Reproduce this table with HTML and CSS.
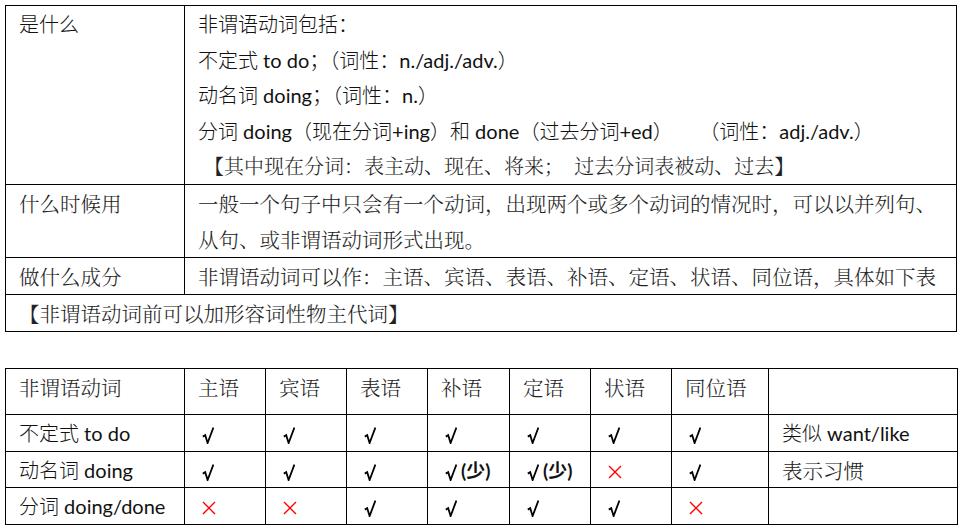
FILE: index.html
```html
<!DOCTYPE html>
<html lang="zh">
<head>
<meta charset="utf-8">
<link rel="stylesheet" href="styles.css">
</head>
<body>
<table class="grid top">
  <colgroup><col class="c-label"><col class="c-body"></colgroup>
  <tr class="r-what">
    <td class="sans">是什么</td>
    <td>
      <div class="sans">非谓语动词包括：</div>
      <div class="sans">不定式<span class="lat"> to do</span>；（词性：<span class="lat">n./adj./adv.</span>）</div>
      <div class="sans">动名词<span class="lat"> doing</span>；（词性：<span class="lat">n.</span>）</div>
      <div class="sans pre">分词<span class="lat"> doing</span>（现在分词<span class="lat">+ing</span>）和<span class="lat"> done</span>（过去分词<span class="lat">+ed</span>）      （词性：<span class="lat">adj./adv.</span>）</div>
      <div class="serif pre note">【其中现在分词：表主动、现在、将来；  过去分词表被动、过去】</div>
    </td>
  </tr>
  <tr class="r-when">
    <td class="serif">什么时候用</td>
    <td class="serif">一般一个句子中只会有一个动词，出现两个或多个动词的情况时，可以以并列句、<br>从句、或非谓语动词形式出现。</td>
  </tr>
  <tr class="r-one">
    <td class="serif">做什么成分</td>
    <td class="serif">非谓语动词可以作：主语、宾语、表语、补语、定语、状语、同位语，具体如下表</td>
  </tr>
  <tr class="r-one">
    <td class="serif" colspan="2">【非谓语动词前可以加形容词性物主代词】</td>
  </tr>
</table>

<table class="grid bottom">
  <colgroup>
    <col class="b1"><col class="b2"><col class="b2"><col class="b2"><col class="b3"><col class="b2"><col class="b2"><col class="b4"><col class="b5">
  </colgroup>
  <tr class="r-head serif">
    <td>非谓语动词</td><td>主语</td><td>宾语</td><td>表语</td><td>补语</td><td>定语</td><td>状语</td><td>同位语</td><td></td>
  </tr>
  <tr class="r-row">
    <td class="sans">不定式<span class="lat"> to do</span></td>
    <td class="mk"><svg class="ck" viewBox="0 0 12 17" width="12" height="17"><path d="M0.8 9.6L3.2 8.2L5.6 16L11.4 0.6"/></svg></td>
    <td class="mk"><svg class="ck" viewBox="0 0 12 17" width="12" height="17"><path d="M0.8 9.6L3.2 8.2L5.6 16L11.4 0.6"/></svg></td>
    <td class="mk"><svg class="ck" viewBox="0 0 12 17" width="12" height="17"><path d="M0.8 9.6L3.2 8.2L5.6 16L11.4 0.6"/></svg></td>
    <td class="mk"><svg class="ck" viewBox="0 0 12 17" width="12" height="17"><path d="M0.8 9.6L3.2 8.2L5.6 16L11.4 0.6"/></svg></td>
    <td class="mk"><svg class="ck" viewBox="0 0 12 17" width="12" height="17"><path d="M0.8 9.6L3.2 8.2L5.6 16L11.4 0.6"/></svg></td>
    <td class="mk"><svg class="ck" viewBox="0 0 12 17" width="12" height="17"><path d="M0.8 9.6L3.2 8.2L5.6 16L11.4 0.6"/></svg></td>
    <td class="mk"><svg class="ck" viewBox="0 0 12 17" width="12" height="17"><path d="M0.8 9.6L3.2 8.2L5.6 16L11.4 0.6"/></svg></td>
    <td class="sans">类似<span class="lat"> want/like</span></td>
  </tr>
  <tr class="r-row">
    <td class="sans">动名词<span class="lat"> doing</span></td>
    <td class="mk"><svg class="ck" viewBox="0 0 12 17" width="12" height="17"><path d="M0.8 9.6L3.2 8.2L5.6 16L11.4 0.6"/></svg></td>
    <td class="mk"><svg class="ck" viewBox="0 0 12 17" width="12" height="17"><path d="M0.8 9.6L3.2 8.2L5.6 16L11.4 0.6"/></svg></td>
    <td class="mk"><svg class="ck" viewBox="0 0 12 17" width="12" height="17"><path d="M0.8 9.6L3.2 8.2L5.6 16L11.4 0.6"/></svg></td>
    <td class="mk"><svg class="ck" viewBox="0 0 12 17" width="12" height="17"><path d="M0.8 9.6L3.2 8.2L5.6 16L11.4 0.6"/></svg><span class="few"><span class="par">(</span>少<span class="par">)</span></span></td>
    <td class="mk"><svg class="ck" viewBox="0 0 12 17" width="12" height="17"><path d="M0.8 9.6L3.2 8.2L5.6 16L11.4 0.6"/></svg><span class="few"><span class="par">(</span>少<span class="par">)</span></span></td>
    <td class="mk"><svg class="no" viewBox="0 0 14 14" width="14" height="14"><path d="M1 1L13 13M13 1L1 13"/></svg></td>
    <td class="mk"><svg class="ck" viewBox="0 0 12 17" width="12" height="17"><path d="M0.8 9.6L3.2 8.2L5.6 16L11.4 0.6"/></svg></td>
    <td class="serif">表示习惯</td>
  </tr>
  <tr class="r-row">
    <td class="sans">分词<span class="lat"> doing/done</span></td>
    <td class="mk"><svg class="no" viewBox="0 0 14 14" width="14" height="14"><path d="M1 1L13 13M13 1L1 13"/></svg></td>
    <td class="mk"><svg class="no" viewBox="0 0 14 14" width="14" height="14"><path d="M1 1L13 13M13 1L1 13"/></svg></td>
    <td class="mk"><svg class="ck" viewBox="0 0 12 17" width="12" height="17"><path d="M0.8 9.6L3.2 8.2L5.6 16L11.4 0.6"/></svg></td>
    <td class="mk"><svg class="ck" viewBox="0 0 12 17" width="12" height="17"><path d="M0.8 9.6L3.2 8.2L5.6 16L11.4 0.6"/></svg></td>
    <td class="mk"><svg class="ck" viewBox="0 0 12 17" width="12" height="17"><path d="M0.8 9.6L3.2 8.2L5.6 16L11.4 0.6"/></svg></td>
    <td class="mk"><svg class="ck" viewBox="0 0 12 17" width="12" height="17"><path d="M0.8 9.6L3.2 8.2L5.6 16L11.4 0.6"/></svg></td>
    <td class="mk"><svg class="no" viewBox="0 0 14 14" width="14" height="14"><path d="M1 1L13 13M13 1L1 13"/></svg></td>
    <td></td>
  </tr>
</table>
</body>
</html>
```
FILE: styles.css
```css
html, body {
  margin: 0;
  padding: 0;
  background: #fff;
}
body {
  padding: 5px 0 0 5px;
  color: #111;
  font-family: "Noto Sans CJK SC", sans-serif;
}
.grid {
  border-collapse: collapse;
  table-layout: fixed;
}
.grid td {
  border: 1.5px solid #000;
  padding: 0 13px;
  vertical-align: top;
  line-height: 35px;
  font-size: 20px;
  white-space: nowrap;
  overflow: hidden;
}
.top { width: 951px; }
.c-label { width: 179px; }
.c-body { width: 772px; }
.r-what { height: 179px; }
.r-what td { line-height: 35.5px; }
.r-when { height: 73px; }
.r-when td { line-height: 36px; }
.r-one { height: 37px; }
.r-one td { padding-top: 1px; }
.r-row { height: 36.5px; }
.r-row td { line-height: 34px; padding-top: 1px; }
.r-head { height: 46.5px; }
.r-head td { padding-top: 1px; }
.sans {
  font-family: "Noto Sans CJK SC", sans-serif;
  font-weight: 300;
  color: #111;
}
.lat {
  font-family: Lato, "Noto Sans CJK SC", sans-serif;
  font-weight: 400;
  line-height: 20px;
}
.serif {
  font-family: "Noto Serif CJK SC", "Noto Sans CJK SC", serif;
  font-weight: 300;
  color: #222;
}
.grid td.serif, .grid tr.serif td { font-size: 20.5px; }
.pre { white-space: pre; }
.note { padding-left: 6px; }
.bottom {
  margin-top: 35.5px;
  width: 952px;
}
.b1 { width: 179px; }
.b2 { width: 81px; }
.b3 { width: 82px; }
.b4 { width: 97px; }
.b5 { width: 189px; }
.grid td.mk { padding-left: 17px; }
.ck {
  display: inline-block;
  vertical-align: -3px;
  fill: none;
  stroke: #000;
  stroke-width: 1.8;
  stroke-linejoin: miter;
  stroke-linecap: butt;
}
.few {
  font-family: "Noto Sans CJK SC", sans-serif;
  font-weight: 700;
  font-size: 19px;
  line-height: 20px;
  margin-left: 4px;
  color: #111;
}
.par {
  font-family: Lato, sans-serif;
  font-weight: 700;
}
.no {
  display: inline-block;
  vertical-align: -1px;
  stroke: #f00;
  stroke-width: 1.4;
  fill: none;
}
```
